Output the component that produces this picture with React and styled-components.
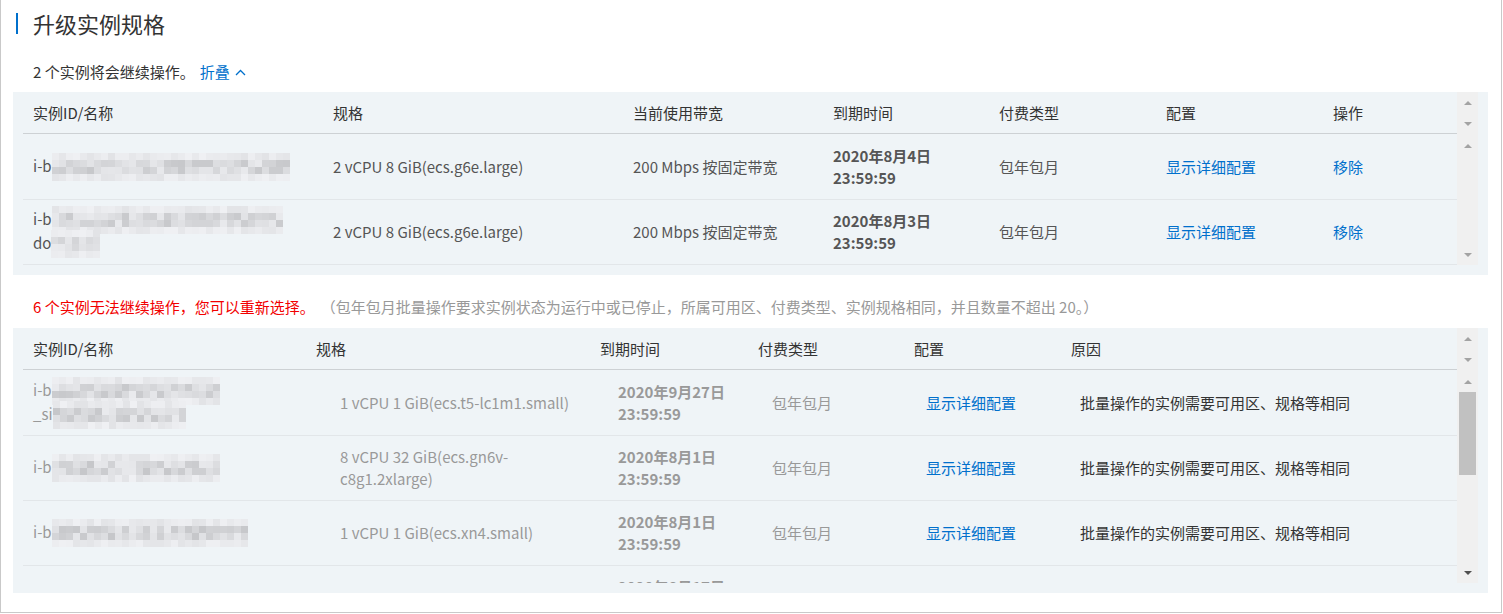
import React from 'react';
import styled, { createGlobalStyle } from 'styled-components';

const Global = createGlobalStyle`
  html, body { margin: 0; padding: 0; background: #fff; }
  body { font-family: "Noto Sans CJK SC", "Noto Sans", sans-serif; color: #555; font-size: 15px; }
  * { box-sizing: border-box; }
`;

const Page = styled.div`
  width: 1502px;
  height: 613px;
  border: 1px solid #c9c9c9;
  border-top: none;
  display: flex;
  flex-direction: column;
  overflow: hidden;
`;

const TitleBar = styled.div`
  display: flex;
  align-items: center;
  height: 46px;
  padding-left: 15px;
  gap: 15px;
`;

const Accent = styled.span`
  width: 2px;
  height: 21px;
  background: #0070cc;
`;

const Title = styled.h1`
  margin: 0;
  font-size: 22px;
  font-weight: 400;
  color: #333;
  line-height: 30px;
`;

const Summary = styled.div`
  padding: ${p => p.$pad};
  line-height: 22px;
  font-size: 15px;
  color: ${p => p.$red ? '#f20000' : '#333'};
  display: flex;
  align-items: center;
`;

const Note = styled.span`
  color: #999;
  margin-left: 6px;
`;

const Toggle = styled.span`
  color: #0070cc;
  margin-left: 5px;
  display: inline-flex;
  align-items: center;
  gap: 5px;
`;

const Panel = styled.div`
  margin: 0 13px 0 12px;
  background: #eff4f7;
  padding: 0 10px 10px 10px;
`;

const Split = styled.div`
  display: flex;
`;

const HeadGrid = styled.div`
  flex: 1;
  display: grid;
  grid-template-columns: ${p => p.$cols};
  height: 42px;
  border-bottom: 1px solid #cdd1d4;
  align-items: center;
  color: #333;
`;

const Body = styled.div`
  flex: 1;
  height: ${p => p.$h}px;
  overflow: hidden;
`;

const Row = styled.div`
  display: grid;
  grid-template-columns: ${p => p.$cols};
  height: 65px;
  border-bottom: 1px solid #e2e6e9;
  align-items: center;
  color: ${p => p.$muted ? '#999' : '#555'};
`;

const Cell = styled.div`
  padding-left: 10px;
  line-height: 22px;
  font-weight: ${p => p.$bold ? 700 : 400};
  color: ${p => p.$tone === 'link' ? '#0070cc' : p.$tone === 'dark' ? '#333' : 'inherit'};
  white-space: nowrap;
`;

const Track = styled.div`
  width: 21px;
  background: #f0f0f0;
  display: flex;
  flex-direction: column;
  height: ${p => p.$h}px;
`;

const ArrowBtn = styled.div`
  height: 21px;
  display: flex;
  align-items: center;
  justify-content: center;
  &::before {
    content: "";
    width: 0;
    height: 0;
    border-left: 4px solid transparent;
    border-right: 4px solid transparent;
    ${p => p.$down
      ? `border-top: 4px solid ${p.$dark ? '#505050' : '#a3a3a3'};`
      : `border-bottom: 4px solid ${p.$dark ? '#505050' : '#a3a3a3'};`}
  }
`;

const Thumb = styled.div`
  height: 83px;
  margin: 0 2px;
  background: #c1c1c1;
`;

const Spacer = styled.div`
  flex: 1;
`;

const MosaicGrid = styled.span`
  display: inline-grid;
  grid-auto-flow: column;
  grid-template-rows: repeat(4, 7px);
  grid-auto-columns: 7px;
  vertical-align: middle;
  margin: -4px 0 -2px;
`;

const Block = styled.span`
  display: block;
`;

function makeRand(seed) {
  let s = seed;
  return () => {
    s = (s * 9301 + 49297) % 233280;
    return s / 233280;
  };
}

function Mosaic({ width, seed }) {
  const rand = makeRand(seed);
  const cols = Math.round(width / 7);
  const blocks = [];
  for (let c = 0; c < cols; c++) {
    for (let r = 0; r < 4; r++) {
      const edge = r === 0 || r === 3;
      const v = edge ? 226 + Math.floor(rand() * 14) : 198 + Math.floor(rand() * 36);
      const b = Math.min(255, v + 4);
      blocks.push(<Block key={c + '-' + r} style={{ background: `rgb(${v},${v + 1},${b})` }} />);
    }
  }
  return <MosaicGrid>{blocks}</MosaicGrid>;
}

function Scroll({ h, thumb, darkDown, split }) {
  return (
    <Track $h={h}>
      <ArrowBtn />
      {thumb && <Thumb />}
      {!split && <Spacer />}
      <ArrowBtn $down $dark={darkDown} />
    </Track>
  );
}

function IdCell({ lines }) {
  return (
    <Cell>
      {lines.map((l, i) => (
        <div key={i}>{l.text}<Mosaic width={l.w} seed={l.seed} /></div>
      ))}
    </Cell>
  );
}

const COLS1 = '300px 300px 200px 166px 167px 167px 1fr';
const HEAD2 = '283px 284px 158px 156px 157px 1fr';
const COLS2 = '307px 278px 154px 154px 154px 1fr';

const heads1 = ['实例ID/名称', '规格', '当前使用带宽', '到期时间', '付费类型', '配置', '操作'];
const heads2 = ['实例ID/名称', '规格', '到期时间', '付费类型', '配置', '原因'];

const rows1 = [
  { id: [{ text: 'i-b', w: 241, seed: 11 }], date: '2020年8月4日' },
  { id: [{ text: 'i-b', w: 231, seed: 23 }, { text: 'do', w: 49, seed: 37 }], date: '2020年8月3日' },
];

const rows2 = [
  { id: [{ text: 'i-b', w: 165, seed: 41 }, { text: '_si', w: 133, seed: 53 }], spec: ['1 vCPU 1 GiB(ecs.t5-lc1m1.small)'], date: '2020年9月27日' },
  { id: [{ text: 'i-b', w: 168, seed: 67 }], spec: ['8 vCPU 32 GiB(ecs.gn6v-', 'c8g1.2xlarge)'], date: '2020年8月1日' },
  { id: [{ text: 'i-b', w: 196, seed: 79 }], spec: ['1 vCPU 1 GiB(ecs.xn4.small)'], date: '2020年8月1日' },
];

export default function App() {
  return (
    <>
      <Global />
      <Page>
        <TitleBar>
          <Accent />
          <Title>升级实例规格</Title>
        </TitleBar>

        <Summary $pad="15px 0 9px 32px">
          2 个实例将会继续操作。
          <Toggle>
            折叠
            <svg width="11" height="7" viewBox="0 0 11 7">
              <polyline points="1,6 5.5,1.5 10,6" fill="none" stroke="#0070cc" strokeWidth="1.3" />
            </svg>
          </Toggle>
        </Summary>

        <Panel>
          <Split>
            <HeadGrid $cols={COLS1}>
              {heads1.map(h => <Cell key={h}>{h}</Cell>)}
            </HeadGrid>
            <Scroll h={43} split />
          </Split>
          <Split>
            <Body $h={130}>
              {rows1.map((r, i) => (
                <Row key={i} $cols={COLS1}>
                  <IdCell lines={r.id} />
                  <Cell>2 vCPU 8 GiB(ecs.g6e.large)</Cell>
                  <Cell>200 Mbps 按固定带宽</Cell>
                  <Cell $bold>{r.date}<br />23:59:59</Cell>
                  <Cell>包年包月</Cell>
                  <Cell $tone="link">显示详细配置</Cell>
                  <Cell $tone="link">移除</Cell>
                </Row>
              ))}
            </Body>
            <Scroll h={130} />
          </Split>
        </Panel>

        <Summary $red $pad="21px 0 10px 32px">
          6 个实例无法继续操作，您可以重新选择。
          <Note>（包年包月批量操作要求实例状态为运行中或已停止，所属可用区、付费类型、实例规格相同，并且数量不超出 20。）</Note>
        </Summary>

        <Panel>
          <Split>
            <HeadGrid $cols={HEAD2}>
              {heads2.map(h => <Cell key={h}>{h}</Cell>)}
            </HeadGrid>
            <Scroll h={43} split />
          </Split>
          <Split>
            <Body $h={212}>
              {rows2.map((r, i) => (
                <Row key={i} $cols={COLS2} $muted>
                  <IdCell lines={r.id} />
                  <Cell>{r.spec.map((s, j) => <div key={j}>{s}</div>)}</Cell>
                  <Cell $bold>{r.date}<br />23:59:59</Cell>
                  <Cell>包年包月</Cell>
                  <Cell $tone="link">显示详细配置</Cell>
                  <Cell $tone="dark">批量操作的实例需要可用区、规格等相同</Cell>
                </Row>
              ))}
              <Row $cols={COLS2} $muted>
                <Cell />
                <Cell />
                <Cell $bold>2020年8月17日<br />23:59:59</Cell>
              </Row>
            </Body>
            <Scroll h={212} thumb darkDown />
          </Split>
        </Panel>
      </Page>
    </>
  );
}
